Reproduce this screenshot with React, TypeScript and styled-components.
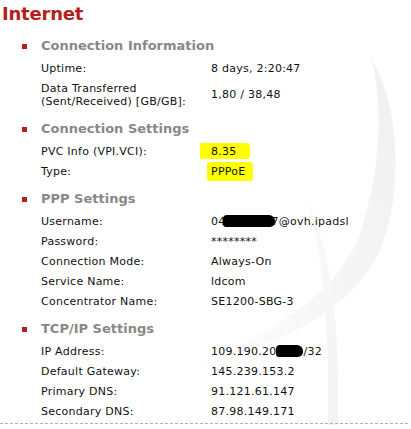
import React from "react";
import styled, { createGlobalStyle } from "styled-components";

const Global = createGlobalStyle`
  html, body { margin: 0; padding: 0; background: #fff; }
  body { font-family: "DejaVu Sans", Verdana, sans-serif; color: #111; }
`;

const Page = styled.div`
  position: relative;
  width: 411px;
  height: 429px;
  overflow: hidden;
  background: #fff;
`;

const Swoosh = styled.svg`
  position: absolute;
  left: 0;
  top: 0;
  width: 411px;
  height: 429px;
  pointer-events: none;
`;

const Content = styled.div`
  position: relative;
  padding-top: 2px;
`;

const Title = styled.h1`
  margin: 0 0 0 2px;
  font-size: 18px;
  line-height: 24px;
  font-weight: bold;
  color: #b3201c;
  letter-spacing: -0.2px;
`;

const Section = styled.section<{ $first?: boolean }>`
  margin-top: ${(p) => (p.$first ? 12 : 10)}px;
`;

const Heading = styled.h2`
  display: flex;
  align-items: center;
  gap: 14px;
  margin: 0 0 4px 0;
  padding-left: 22px;
  font-size: 13px;
  line-height: 16px;
  font-weight: bold;
  color: #888;
`;

const Bullet = styled.span`
  width: 5px;
  height: 5px;
  background: #b3201c;
  flex: none;
`;

const Rows = styled.div`
  display: grid;
  grid-template-columns: 170px 1fr;
  padding-left: 41px;
  font-size: 11px;
  line-height: 13px;
  letter-spacing: 0.25px;
`;

const Label = styled.div`
  padding: 3.5px 0;
  color: #111;
`;

const Value = styled.div`
  padding: 3.5px 0;
  align-self: center;
  color: #111;
  white-space: nowrap;
`;

const Mark = styled.span<{ $l: number; $r: number; $t: number; $b: number }>`
  display: inline-block;
  background: #ffff00;
  margin-left: -${(p) => p.$l}px;
  padding: ${(p) => p.$t}px ${(p) => p.$r}px ${(p) => p.$b}px ${(p) => p.$l}px;
  margin-top: -${(p) => p.$t}px;
  margin-bottom: -${(p) => p.$b}px;
  border-radius: 2px 4px 3px 2px;
`;

const Blot = styled.span<{ $w: number; $ml?: number; $mr?: number }>`
  display: inline-block;
  width: ${(p) => p.$w}px;
  height: 12px;
  margin-left: ${(p) => p.$ml ?? 0}px;
  margin-right: ${(p) => p.$mr ?? 0}px;
  vertical-align: -2px;
  background: #000;
  border-radius: 4px 6px 5px 3px;
`;

const Divider = styled.div`
  margin: 2px 3px 0 0;
  border-top: 1px dashed #b0b0b0;
`;

type Row = [React.ReactNode, React.ReactNode];

const sections: { title: string; rows: Row[] }[] = [
  {
    title: "Connection Information",
    rows: [
      ["Uptime:", "8 days, 2:20:47"],
      [
        <>
          Data Transferred
          <br />
          (Sent/Received) [GB/GB]:
        </>,
        "1,80 / 38,48",
      ],
    ],
  },
  {
    title: "Connection Settings",
    rows: [
      [
        "PVC Info (VPI.VCI):",
        <Mark $l={11} $r={13} $t={2} $b={1}>
          8.35
        </Mark>,
      ],
      [
        "Type:",
        <Mark $l={4} $r={8} $t={3} $b={3}>
          PPPoE
        </Mark>,
      ],
    ],
  },
  {
    title: "PPP Settings",
    rows: [
      [
        "Username:",
        <>
          04
          <Blot $w={52} $ml={-3} $mr={-3} />
          7@ovh.ipadsl
        </>,
      ],
      ["Password:", "********"],
      ["Connection Mode:", "Always-On"],
      ["Service Name:", "ldcom"],
      ["Concentrator Name:", "SE1200-SBG-3"],
    ],
  },
  {
    title: "TCP/IP Settings",
    rows: [
      [
        "IP Address:",
        <>
          109.190.20
          <Blot $w={27} />
          /32
        </>,
      ],
      ["Default Gateway:", "145.239.153.2"],
      ["Primary DNS:", "91.121.61.147"],
      ["Secondary DNS:", "87.98.149.171"],
    ],
  },
];

export default function App() {
  return (
    <>
      <Global />
      <Page>
        <Swoosh viewBox="0 0 411 429">
          <defs>
            <linearGradient id="g1" x1="0" y1="1" x2="1" y2="0">
              <stop offset="0" stopColor="#ffffff" />
              <stop offset="0.5" stopColor="#f6f6f6" />
              <stop offset="1" stopColor="#f0f0f0" />
            </linearGradient>
            <linearGradient id="g2" x1="0" y1="0" x2="0" y2="1">
              <stop offset="0" stopColor="#fafafa" />
              <stop offset="1" stopColor="#f3f3f3" />
            </linearGradient>
          </defs>
          <path
            d="M372,60 C402,110 402,200 380,250 C355,305 290,345 175,373 C270,335 330,300 358,240 C378,180 385,120 372,60 Z"
            fill="url(#g1)"
          />
          <path
            d="M306,195 C322,250 330,330 328,425 L338,425 C340,330 333,255 306,195 Z"
            fill="url(#g2)"
          />
        </Swoosh>
        <Content>
          <Title>Internet</Title>
          {sections.map((s, i) => (
            <Section key={s.title} $first={i === 0}>
              <Heading>
                <Bullet />
                {s.title}
              </Heading>
              <Rows>
                {s.rows.map((r, j) => (
                  <React.Fragment key={j}>
                    <Label>{r[0]}</Label>
                    <Value>{r[1]}</Value>
                  </React.Fragment>
                ))}
              </Rows>
            </Section>
          ))}
          <Divider />
        </Content>
      </Page>
    </>
  );
}
